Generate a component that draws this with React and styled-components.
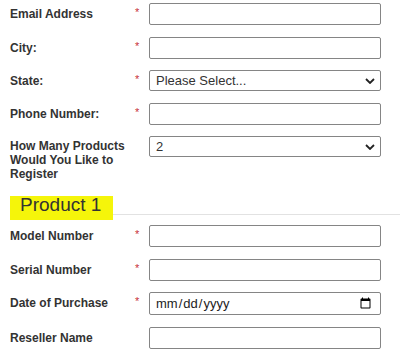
import styled, { createGlobalStyle } from 'styled-components';

const contactFields = [
  { id: 'email', label: 'Email Address', required: true, kind: 'text' },
  { id: 'city', label: 'City:', required: true, kind: 'text' },
  { id: 'state', label: 'State:', required: true, kind: 'select', options: ['Please Select...'] },
  { id: 'phone', label: 'Phone Number:', required: true, kind: 'text' },
  { id: 'count', label: 'How Many Products Would You Like to Register', kind: 'select', options: ['2'] },
];

const productFields = [
  { id: 'model', label: 'Model Number', required: true, kind: 'text' },
  { id: 'serial', label: 'Serial Number', required: true, kind: 'text' },
  { id: 'date', label: 'Date of Purchase', required: true, kind: 'date' },
  { id: 'reseller', label: 'Reseller Name', kind: 'text' },
];

function Field({ id, label, required, kind, options }) {
  return (
    <Row>
      <Label htmlFor={id} $multi={label.length > 20}>
        {label}
      </Label>
      <Req>{required ? '*' : ''}</Req>
      {kind === 'select' && (
        <Select id={id} defaultValue={options[0]}>
          {options.map((o) => (
            <option key={o}>{o}</option>
          ))}
        </Select>
      )}
      {kind === 'text' && <Input id={id} type="text" />}
      {kind === 'date' && <DateInput id={id} type="date" />}
    </Row>
  );
}

export default function App() {
  return (
    <>
      <GlobalStyle />
      <Form>
        {contactFields.map((f) => (
          <Field key={f.id} {...f} />
        ))}
        <SectionTitle>Product 1</SectionTitle>
        {productFields.map((f) => (
          <Field key={f.id} {...f} />
        ))}
      </Form>
    </>
  );
}

const GlobalStyle = createGlobalStyle`
  body {
    margin: 0;
    background: #fff;
    font-family: "Liberation Sans", Arial, sans-serif;
  }
`;

const Form = styled.form`
  width: 400px;
  padding-top: 3px;
`;

const Row = styled.div`
  display: grid;
  grid-template-columns: 125px 14px 232px;
  align-items: start;
  padding-left: 10px;
  margin-bottom: 11.5px;
`;

const Label = styled.label`
  font-size: 12px;
  font-weight: bold;
  color: #333;
  line-height: 14px;
  padding-top: ${(p) => (p.$multi ? '3px' : '4px')};
`;

const Req = styled.span`
  color: #c8323a;
  font-size: 11px;
  padding-top: 3px;
`;

const Input = styled.input`
  box-sizing: border-box;
  width: 232px;
  height: 22px;
  margin: 0;
  border: 1px solid #858585;
  border-radius: 2px;
  background: #fff;
  font-family: "Liberation Sans", Arial, sans-serif;
  font-size: 13px;
  color: #333;
  padding: 0 6px;
`;

const DateInput = styled(Input)`
  height: 23px;
  padding: 0 6px 0 5px;
  color: #222;
`;

const Select = styled.select`
  box-sizing: border-box;
  width: 232px;
  height: 21px;
  margin: 0;
  border: 1px solid #858585;
  border-radius: 2px;
  appearance: none;
  background: #fff
    url("data:image/svg+xml;utf8,<svg xmlns='http://www.w3.org/2000/svg' width='10' height='6' viewBox='0 0 10 6'><path d='M1 1l4 4 4-4' fill='none' stroke='%23222' stroke-width='1.8'/></svg>")
    no-repeat right 5px center;
  font-family: "Liberation Sans", Arial, sans-serif;
  font-size: 13px;
  color: #333;
  padding: 0 20px 0 6px;
`;

const SectionTitle = styled.h3`
  position: relative;
  z-index: 0;
  margin: 15px 0 10px 20px;
  height: 18px;
  border-bottom: 1px solid #e2e2e2;
  font-size: 19px;
  font-weight: normal;
  line-height: 17px;
  color: #333;

  &::before {
    content: '';
    position: absolute;
    z-index: -1;
    left: -10px;
    top: 0;
    width: 103px;
    height: 24px;
    background: #f5f50a;
  }
`;
